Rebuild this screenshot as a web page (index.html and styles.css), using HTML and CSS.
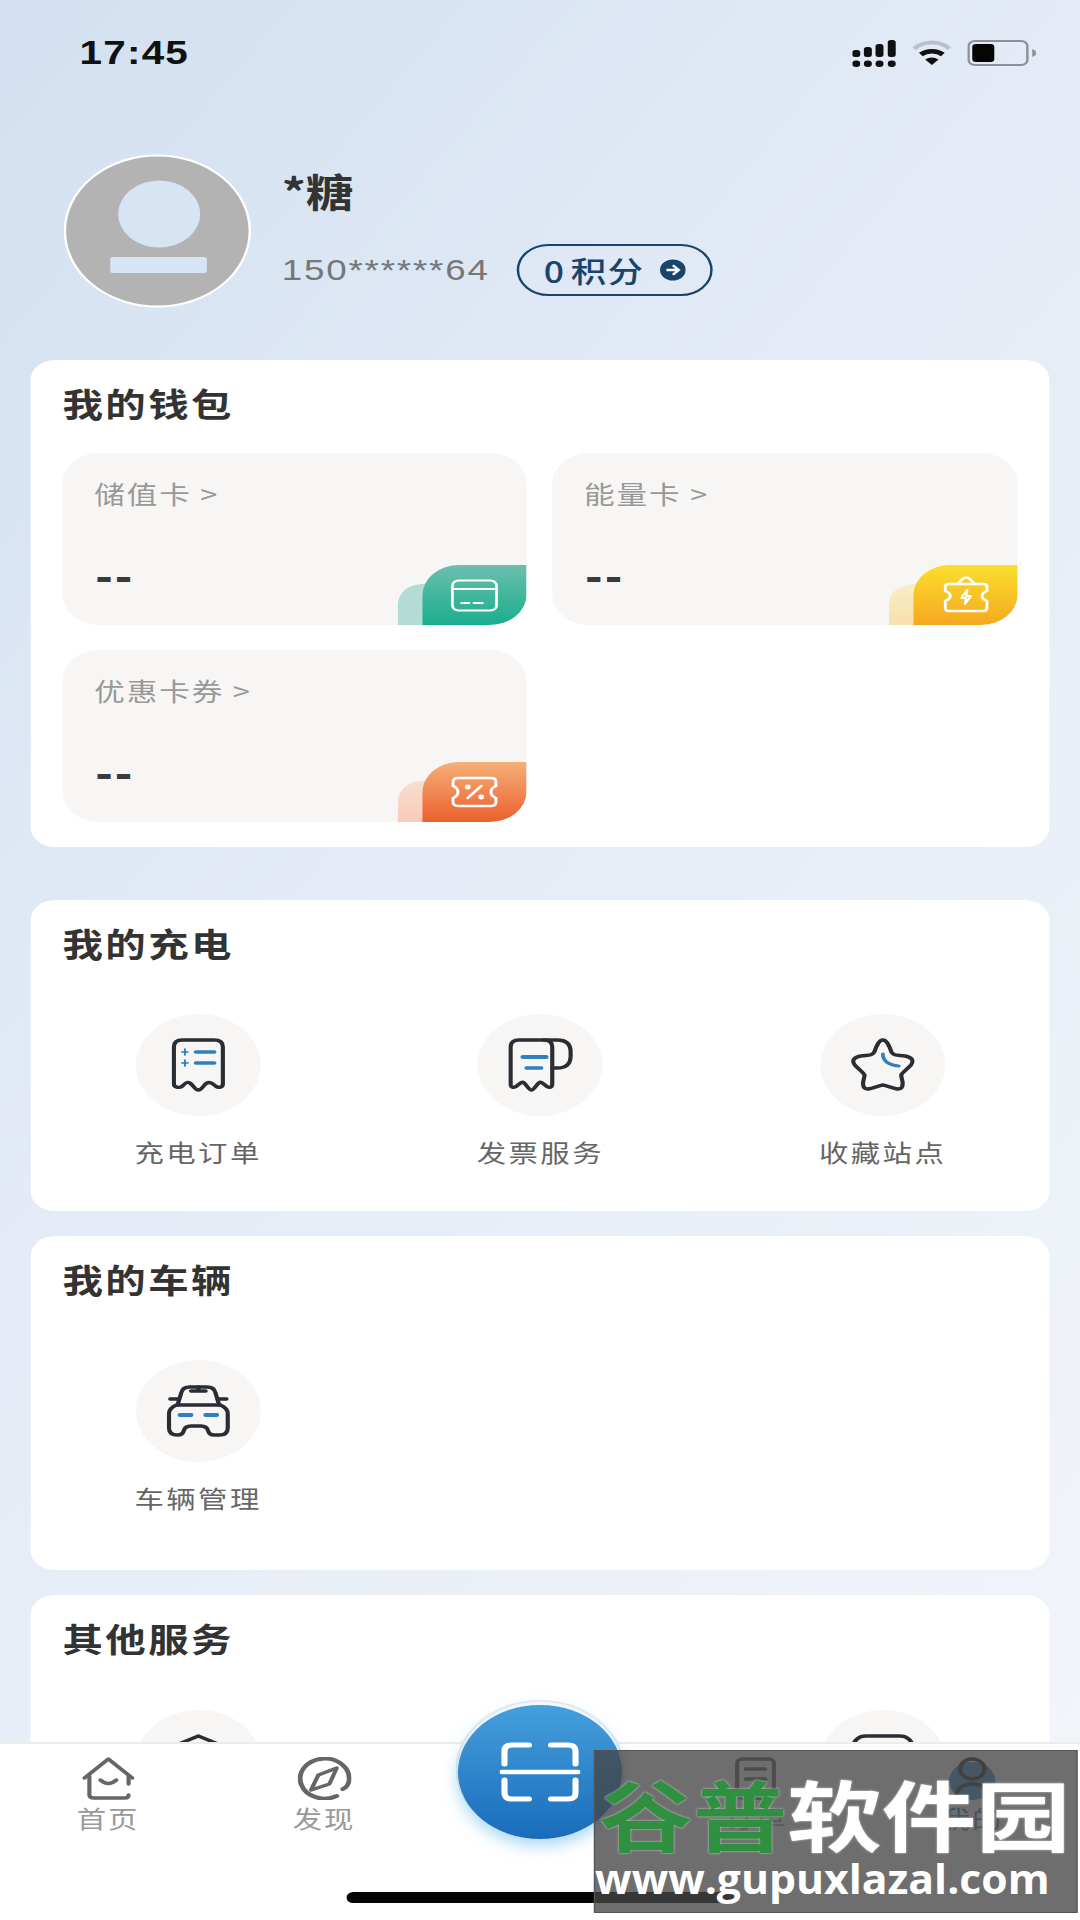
FILE: index.html
```html
<!DOCTYPE html>
<html lang="zh-CN">

<head>
    <meta charset="UTF-8">
    <meta name="viewport" content="width=device-width, initial-scale=1.0">
    <title>我的</title>
    <link rel="stylesheet" href="styles.css">
</head>

<body>

    <div class="screen">

        <div class="status-bar">
            <span class="clock">17:45</span>
            <div class="status-icons">
                <svg width="36" height="27" viewBox="0 0 36 27">
                    <g fill="#111">
                        <rect x="0" y="10" width="6.5" height="7" rx="2.5" />
                        <rect x="9.5" y="7" width="6.5" height="10" rx="2.5" />
                        <rect x="19" y="4" width="6.5" height="13" rx="2.5" />
                        <rect x="29" y="0" width="6.5" height="17" rx="2.5" />
                        <rect x="0" y="20.5" width="6.5" height="6.5" rx="3" />
                        <rect x="9.5" y="20.5" width="6.5" height="6.5" rx="3" />
                        <rect x="19" y="20.5" width="6.5" height="6.5" rx="3" />
                        <rect x="29" y="20.5" width="6.5" height="6.5" rx="3" />
                    </g>
                </svg>
                <svg width="32" height="25" viewBox="0 0 32 25">
                    <path d="M1.5 8.5C10 .5 22 .5 30.5 8.5" fill="none" stroke="#b9c0cb" stroke-width="4" />
                    <path d="M7 14.5C12 10 20 10 25 14.5" fill="none" stroke="#111" stroke-width="4.5" />
                    <path d="M10.5 19.5C14 16.8 18 16.8 21.5 19.5L16 25z" fill="#111" />
                </svg>
                <svg width="56" height="26" viewBox="0 0 56 26">
                    <rect x="1" y="1" width="48" height="24" rx="5" fill="none" stroke="#8b9099" stroke-width="2" />
                    <rect x="4" y="4" width="18" height="18" rx="3" fill="#050505" />
                    <path d="M53 9l3 2v4l-3 2z" fill="#8b9099" />
                </svg>
            </div>
        </div>

        <div class="profile">
            <svg class="avatar" width="153" height="154" viewBox="0 0 153 154">
                <circle cx="76.5" cy="77" r="75.5" fill="#b3b3b3" stroke="#fff" stroke-width="2" />
                <circle cx="78" cy="60" r="33.5" fill="#d7e4f3" />
                <rect x="38" y="103" width="79" height="16" rx="2" fill="#d7e4f3" />
            </svg>
            <div class="profile-info">
                <div class="user-name">*糖</div>
                <div class="user-meta">
                    <span class="user-phone">150******64</span>
                    <span class="points-pill">
                        <span class="points-text">0 积分</span>
                        <svg width="21" height="22" viewBox="0 0 20 20">
                            <circle cx="10" cy="10" r="10" fill="#17456b" />
                            <path d="M5 10h9M10 5.5l4.5 4.5-4.5 4.5" fill="none" stroke="#fff" stroke-width="2.2" />
                        </svg>
                    </span>
                </div>
            </div>
        </div>

        <section class="card wallet">
            <h2 class="card-title">我的钱包</h2>
            <div class="tile-grid">
                <div class="tile">
                    <div class="tile-label">储值卡 &gt;</div>
                    <div class="tile-value">--</div>
                    <span class="badge-back back-green"></span>
                    <span class="badge front-green">
                        <svg width="39" height="33" viewBox="0 0 39 33" fill="none" stroke="#fff" stroke-width="2.2" stroke-linecap="round">
                            <rect x="1.5" y="1.5" width="36" height="30" rx="5" />
                            <path d="M2 10h35M9 24h6M19 24h7" />
                        </svg>
                    </span>
                </div>
                <div class="tile">
                    <div class="tile-label">能量卡 &gt;</div>
                    <div class="tile-value">--</div>
                    <span class="badge-back back-yellow"></span>
                    <span class="badge front-yellow">
                        <svg width="38" height="38" viewBox="0 0 38 38" fill="none" stroke="#fff" stroke-width="2.4" stroke-linejoin="round">
                            <path d="M12 8l4-5q3-3 6 0l4 5" />
                            <path d="M5 8h28q3 0 3 3v4q-4 2-4 5t4 5v7q0 3-3 3H5q-3 0-3-3v-7q4-2 4-5t-4-5v-4q0-3 3-3z" />
                            <path d="M20 14l-5 8h4l-1 6 5-8h-4z" stroke-width="1.8" />
                        </svg>
                    </span>
                </div>
                <div class="tile">
                    <div class="tile-label">优惠卡券 &gt;</div>
                    <div class="tile-value">--</div>
                    <span class="badge-back back-orange"></span>
                    <span class="badge front-orange">
                        <svg width="39" height="32" viewBox="0 0 39 32" fill="none" stroke="#fff" stroke-width="2.4" stroke-linecap="round">
                            <path d="M6 2h27q4 0 4 4v4q-4 2-4 6t4 6v4q0 4-4 4H6q-4 0-4-4v-4q4-2 4-6t-4-6V6q0-4 4-4z" />
                            <path d="M14 22l11-12" />
                            <circle cx="14" cy="11" r="1.2" fill="#fff" />
                            <circle cx="25" cy="21" r="1.2" fill="#fff" />
                        </svg>
                    </span>
                </div>
            </div>
        </section>

        <section class="card charging">
            <h2 class="card-title">我的充电</h2>
            <div class="menu-grid">
                <div class="menu-item">
                    <span class="menu-icon">
                        <svg width="44" height="54" viewBox="0 0 44 54" fill="none" stroke-linecap="round">
                            <path d="M2 46V9q0-7 7-7h26q7 0 7 7v37c0 4-4 4-6 2s-4-5-7-3-4 7-7 7-4-5-7-7-4 1-6 3-7 2-7-2z" stroke="#2a2d33" stroke-width="3.4" stroke-linejoin="round" />
                            <path d="M20 14h15M20 25h15" stroke="#2f7fc1" stroke-width="3.6" />
                            <path d="M11 11v6M8.5 14h5M11 22v6M8.5 25h5" stroke="#2f7fc1" stroke-width="1.6" />
                        </svg>
                    </span>
                    <span class="menu-label">充电订单</span>
                </div>
                <div class="menu-item">
                    <span class="menu-icon">
                        <svg width="53" height="54" viewBox="0 0 53 54" fill="none" stroke-linecap="round">
                            <path d="M36 30V9q0-7-7-7H9Q2 2 2 9v37c0 4 3 4 5 2s4-5 6-3 4 7 6 7 4-5 6-7 4 1 6 3 5 2 5-2z" stroke="#2a2d33" stroke-width="3.4" stroke-linejoin="round" />
                            <path d="M29 2h11q11 0 11 12v4q0 12-11 12h-4" stroke="#2a2d33" stroke-width="3.4" />
                            <path d="M12 19h19" stroke="#2f7fc1" stroke-width="4" />
                            <path d="M15 30h12" stroke="#2f7fc1" stroke-width="3.6" />
                        </svg>
                    </span>
                    <span class="menu-label">发票服务</span>
                </div>
                <div class="menu-item">
                    <span class="menu-icon">
                        <svg width="52" height="54" viewBox="0 0 52 54" fill="none" stroke-linecap="round">
                            <path d="M26 2c3 0 5 5 7 12 2 4 5 3 11 4 5 1 8 4 5 9-3 4-7 7-8 10 0 5 3 9 0 13-3 3-10-2-15-3-5 1-12 6-15 3-3-4 0-8 0-13-1-3-5-6-8-10-3-5 0-8 5-9 6-1 9 0 11-4 2-7 4-12 7-12z" stroke="#2a2d33" stroke-width="3.4" stroke-linejoin="round" />
                            <path d="M26 16c0 7 5 11 13 12" stroke="#2f7fc1" stroke-width="3" />
                        </svg>
                    </span>
                    <span class="menu-label">收藏站点</span>
                </div>
            </div>
        </section>

        <section class="card vehicles">
            <h2 class="card-title">我的车辆</h2>
            <div class="menu-grid">
                <div class="menu-item">
                    <span class="menu-icon">
                        <svg width="52" height="52" viewBox="0 0 52 52" fill="none" stroke="#2a2d33" stroke-width="3.4" stroke-linecap="round" stroke-linejoin="round">
                            <path d="M9 20l3-12q1-6 7-6h14q6 0 7 6l3 12" />
                            <path d="M8 20h36q6 3 6 9v14q0 7-7 7h-4q-4 0-5-4-1-5-6-5H20q-5 0-6 5-1 4-5 4-7 0-7-7V29q0-6 6-9z" />
                            <path d="M3 14h6M43 14h6M20 6h12M26 2v4" />
                            <path d="M11 30h9M32 30h9" stroke="#2f7fc1" stroke-width="4" />
                        </svg>
                    </span>
                    <span class="menu-label">车辆管理</span>
                </div>
            </div>
        </section>

        <section class="card services">
            <h2 class="card-title">其他服务</h2>
            <div class="menu-grid">
                <div class="menu-item">
                    <span class="menu-icon">
                        <svg width="52" height="54" viewBox="0 0 52 54" fill="none" stroke="#2a2d33" stroke-width="3.4">
                            <path d="M2 14L26 2l24 12v30H2z" stroke-linejoin="round" />
                        </svg>
                    </span>
                </div>
                <div class="menu-item"></div>
                <div class="menu-item">
                    <span class="menu-icon">
                        <svg width="52" height="54" viewBox="0 0 52 54" fill="none" stroke="#2a2d33" stroke-width="3.4">
                            <rect x="2" y="2" width="48" height="44" rx="10" />
                        </svg>
                    </span>
                </div>
            </div>
        </section>

        <nav class="tab-bar">
            <div class="tab">
                <svg width="43" height="43" viewBox="0 0 43 43" fill="none" stroke="#666" stroke-width="3.4" stroke-linecap="round" stroke-linejoin="round">
                    <path d="M2 21L21.5 2 41 21" />
                    <path d="M6 19v19q0 3 4 3h25q3 0 3-3M38 19v8" />
                    <path d="M15 23q6.5 7 13 0" />
                </svg>
                <span class="tab-label">首页</span>
            </div>
            <div class="tab">
                <svg width="44" height="43" viewBox="0 0 44 43" fill="none" stroke="#666" stroke-linecap="round" stroke-linejoin="round">
                    <path d="M32 39A20 20 0 1 1 42 24q-1 6-5 8" stroke-width="4" />
                    <path d="M32 11L26 27 11 33l6-15z" stroke-width="3.4" />
                </svg>
                <span class="tab-label">发现</span>
            </div>
            <div class="tab"></div>
            <div class="tab">
                <svg width="34" height="43" viewBox="0 0 34 43" fill="none" stroke="#666" stroke-width="3.4" stroke-linecap="round">
                    <rect x="2" y="2" width="30" height="39" rx="4" />
                    <path d="M9 12h16M9 22h16" />
                </svg>
                <span class="tab-label">订单</span>
            </div>
            <div class="tab">
                <svg width="42" height="43" viewBox="0 0 42 43" fill="none">
                    <circle cx="21" cy="24" r="19" fill="#4a93c9" />
                    <circle cx="21" cy="12" r="10" stroke="#333" stroke-width="3.4" />
                    <path d="M8 41q0-14 13-14t13 14" stroke="#333" stroke-width="3.4" stroke-linecap="round" />
                </svg>
                <span class="tab-label tab-label-active">我的</span>
            </div>
        </nav>

        <div class="scan-ring">
            <button class="scan-button">
                <svg width="66" height="60" viewBox="0 0 66 60" fill="none" stroke="#fff" stroke-width="5" stroke-linecap="round">
                    <path d="M24 3H10Q4 3 4 9v13M42 3h14q6 0 6 6v13M4 38v13q0 6 6 6h14M62 38v13q0 6-6 6H42" />
                    <path d="M2 30h62" stroke-width="4.5" />
                </svg>
            </button>
        </div>

        <div class="home-indicator"></div>

        <div class="site-stamp">
            <div class="stamp-name"><span class="stamp-green">谷普</span>软件园</div>
            <div class="stamp-url">www.gupuxlazal.com</div>
        </div>

    </div>

</body>

</html>
```

FILE: styles.css
```css
html,
body {
    margin: 0;
    padding: 0;
    width: 1080px;
    height: 1920px;
    overflow: hidden;
}

/* the app is laid out 882 wide and pulled out to the full window width */
.screen {
    position: relative;
    width: 882px;
    height: 1920px;
    overflow: hidden;
    transform: scaleX(1.2245);
    transform-origin: 0 0;
    background: linear-gradient(125deg, #d2e0f1 0%, #e4ebf6 40%, #f3f6fa 100%);
    font-family: "Noto Sans CJK SC", "Noto Sans", sans-serif;
    color: #333;
}

.status-bar {
    display: flex;
    justify-content: space-between;
    align-items: flex-start;
    padding: 40px 36px 0 65px;
    box-sizing: border-box;
    height: 154px;
}

.clock {
    font-family: "Liberation Sans", sans-serif;
    font-size: 33px;
    font-weight: bold;
    line-height: 26px;
    color: #111;
    letter-spacing: 1px;
}

.status-icons {
    display: flex;
    gap: 13px;
}

.profile {
    display: flex;
    height: 154px;
    padding-left: 52px;
}

.profile-info {
    margin-left: 25px;
}

.user-name {
    font-size: 39px;
    font-weight: 700;
    line-height: 44px;
    margin-top: 14px;
    color: #333;
}

.user-meta {
    display: flex;
    align-items: center;
    margin-top: 32px;
}

.user-phone {
    font-family: "Liberation Sans", sans-serif;
    font-size: 30px;
    letter-spacing: 1.5px;
    color: #777;
    width: 192px;
}

.points-pill {
    display: flex;
    align-items: center;
    justify-content: space-between;
    width: 160px;
    height: 52px;
    box-sizing: border-box;
    border: 2px solid #17456b;
    border-radius: 26px;
    padding: 0 20px;
    color: #17456b;
}

.points-text {
    font-size: 29px;
    font-weight: 500;
    white-space: nowrap;
    word-spacing: -3px;
    letter-spacing: 1px;
}

.card {
    margin: 25px 25px 0;
    background-color: #fff;
    border-radius: 20px;
}

.card-title {
    margin: 0;
    padding: 23px 0 0 26px;
    font-size: 33px;
    font-weight: 700;
    line-height: 40px;
    letter-spacing: 2px;
    color: #333;
}

.wallet {
    margin-top: 52px;
    height: 487px;
}

.tile-grid {
    display: grid;
    grid-template-columns: 379px 380px;
    gap: 25px 21px;
    padding: 30px 0 0 26px;
}

.tile {
    position: relative;
    height: 172px;
    background-color: #f7f6f4;
    border-radius: 30px;
    overflow: hidden;
    padding-left: 26px;
    box-sizing: border-box;
}

.tile-label {
    margin-top: 22px;
    font-size: 25px;
    line-height: 36px;
    letter-spacing: 1.5px;
    color: #999;
}

.tile-value {
    margin-top: 41px;
    margin-left: 1px;
    font-family: "Liberation Sans", sans-serif;
    font-size: 42px;
    font-weight: bold;
    line-height: 50px;
    letter-spacing: 2px;
    color: #3a3a3a;
}

.badge,
.badge-back {
    position: absolute;
    bottom: 0;
}

.badge {
    right: 0;
    width: 85px;
    height: 60px;
    display: flex;
    align-items: center;
    justify-content: center;
    border-radius: 30px 0 30px 0;
}

.badge-back {
    right: 65px;
    width: 40px;
    height: 41px;
    border-radius: 20px 0 0 0;
}

.front-green {
    background: linear-gradient(180deg, #6cbfad, #19ae8d);
}

.back-green {
    background-color: #b4dcd5;
}

.front-yellow {
    background: linear-gradient(180deg, #fadf2e, #f5a81f);
}

.back-yellow {
    background: linear-gradient(180deg, #f7eec4, #f7e0ad);
}

.front-orange {
    background: linear-gradient(180deg, #f5b078, #ec5f2e);
}

.back-orange {
    background: linear-gradient(180deg, #f7ded0, #f8cbbb);
}

.charging {
    margin-top: 53px;
    height: 311px;
}

.vehicles {
    height: 334px;
}

.services {
    height: 400px;
}

.menu-grid {
    display: grid;
    grid-template-columns: repeat(3, 279.5px);
    margin: 51px 0 0 -3px;
}

.vehicles .menu-grid {
    margin-top: 61px;
}

.services .menu-grid {
    margin-top: 52px;
}

.menu-item {
    display: flex;
    flex-direction: column;
    align-items: center;
}

.menu-icon {
    display: flex;
    align-items: center;
    justify-content: center;
    width: 102px;
    height: 102px;
    border-radius: 50%;
    background-color: #f7f6f4;
}

.menu-label {
    margin-top: 20px;
    font-size: 24px;
    line-height: 32px;
    letter-spacing: 2px;
    color: #666;
    white-space: nowrap;
}

.tab-bar {
    position: absolute;
    left: 0;
    right: 0;
    bottom: 0;
    height: 178px;
    box-sizing: border-box;
    display: grid;
    grid-template-columns: repeat(5, 1fr);
    background-color: #fff;
    border-top: 2px solid #ececec;
}

.tab {
    display: flex;
    flex-direction: column;
    align-items: center;
    padding-top: 13px;
}

.tab-label {
    font-size: 24px;
    line-height: 30px;
    margin-top: 3px;
    letter-spacing: 1.5px;
    color: #999;
}

.tab-label-active {
    color: #2f7fc1;
}

.scan-ring {
    position: absolute;
    left: 372px;
    top: 1700px;
    width: 138px;
    height: 138px;
    box-sizing: border-box;
    border-radius: 50%;
    background-color: #fff;
    border: 2px solid #e9ecef;
    border-bottom-color: transparent;
}

.scan-button {
    display: flex;
    align-items: center;
    justify-content: center;
    width: 134px;
    height: 134px;
    margin-top: 3px;
    padding: 0;
    border: none;
    border-radius: 50%;
    background: linear-gradient(180deg, #459fdc, #1a6cba);
    box-shadow: 0 6px 14px rgba(90, 180, 235, .55);
}

.home-indicator {
    position: absolute;
    left: 283px;
    top: 1892px;
    width: 317px;
    height: 11px;
    border-radius: 6px;
    background-color: #050505;
}

.site-stamp {
    position: absolute;
    left: 485px;
    top: 1750px;
    width: 395px;
    height: 163px;
    box-sizing: border-box;
    border: 1px solid #555;
    background-color: rgba(69, 69, 69, .78);
    color: #fff;
    font-weight: 700;
}

.stamp-name {
    font-size: 77px;
    line-height: 78px;
    margin: 23px 0 0 3px;
    white-space: nowrap;
    text-shadow: 0 0 2px #ddd;
}

.stamp-green {
    color: #2f9140;
}

/* narrowed so the address fits the stamp's width */
.stamp-url {
    font-family: "Open Sans", sans-serif;
    font-size: 41px;
    line-height: 46px;
    margin-top: 3px;
    white-space: nowrap;
    transform: scaleX(.85);
    transform-origin: 0 0;
}
```
